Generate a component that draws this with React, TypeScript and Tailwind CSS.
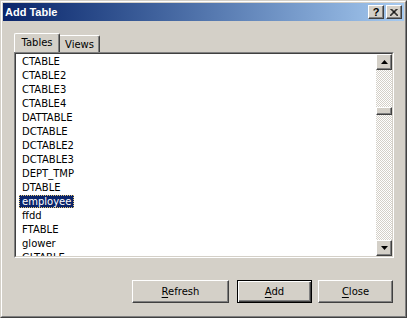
import React from 'react';

const tables = [
  'CTABLE',
  'CTABLE2',
  'CTABLE3',
  'CTABLE4',
  'DATTABLE',
  'DCTABLE',
  'DCTABLE2',
  'DCTABLE3',
  'DEPT_TMP',
  'DTABLE',
  'employee',
  'ffdd',
  'FTABLE',
  'glower',
  'GLTABLE',
];

const raised =
  'border border-t-white border-l-white border-r-[#404040] border-b-[#404040] shadow-[inset_-1px_-1px_#808080,inset_1px_1px_#d4d0c8] bg-[#d4d0c8]';

function Arrow({ up }: { up?: boolean }) {
  return (
    <svg width="7" height="4" viewBox="0 0 7 4" className="block">
      {up ? (
        <polygon points="3.5,0 7,4 0,4" fill="#000" />
      ) : (
        <polygon points="0,0 7,0 3.5,4" fill="#000" />
      )}
    </svg>
  );
}

function ScrollButton({ up }: { up?: boolean }) {
  return (
    <div className={`${raised} w-[16px] h-[16px] flex items-center justify-center`}>
      <Arrow up={up} />
    </div>
  );
}

function DialogButton({ label, width, isDefault }: { label: string; width: string; isDefault?: boolean }) {
  const cls = isDefault
    ? 'border border-black shadow-[inset_1px_1px_#ffffff,inset_-1px_-1px_#404040,inset_-2px_-2px_#808080] bg-[#d4d0c8]'
    : raised;
  return (
    <button className={`${cls} ${width} h-[23px] flex items-center justify-center text-[10px] text-black`}>
      <span>
        <u className="underline-offset-[2px]">{label[0]}</u>
        {label.slice(1)}
      </span>
    </button>
  );
}

export default function App() {
  return (
    <div className="w-[407px] h-[318px] bg-[#d4d0c8] border border-t-[#d4d0c8] border-l-[#d4d0c8] border-r-[#404040] border-b-[#404040] font-['DejaVu_Sans',sans-serif] select-none">
      <div className="h-full border border-t-white border-l-white border-r-[#808080] border-b-[#808080] p-px flex flex-col">
        {/* Caption */}
        <div className="h-[18px] flex items-center bg-gradient-to-r from-[#0a246a] to-[#a6caf0] pl-[2px] pr-[2px]">
          <span className="font-['Liberation_Sans',sans-serif] font-bold text-[11px] text-white leading-none">Add Table</span>
          <div className="ml-auto flex gap-[2px]">
            <div className={`${raised} w-[16px] h-[14px] flex items-center justify-center font-['Liberation_Sans',sans-serif] font-bold text-[11px] leading-none text-black`}>
              ?
            </div>
            <div className={`${raised} w-[16px] h-[14px] flex items-center justify-center`}>
              <svg width="8" height="7" viewBox="0 0 8 7" className="block">
                <path d="M0.5 0 L7.5 7 M1.5 0 L8.5 7 M7.5 0 L0.5 7 M6.5 0 L-0.5 7" stroke="#000" strokeWidth="1" />
              </svg>
            </div>
          </div>
        </div>

        {/* Body */}
        <div className="flex flex-col pl-[11px] pr-[10px]">
          {/* Tabs */}
          <div className="flex items-end h-[19px] mt-[12px] text-[10px] text-black">
            <div className="w-[46px] h-[19px] border-l border-t border-r border-l-white border-t-white border-r-[#404040] rounded-t-[2px] shadow-[inset_-1px_0_#808080] flex items-center justify-center pb-[1px]">
              Tables
            </div>
            <div className="w-[40px] h-[17px] border-t border-r border-t-white border-r-[#404040] rounded-tr-[2px] shadow-[inset_-1px_0_#808080] flex items-center justify-center">
              Views
            </div>
          </div>

          {/* List box */}
          <div className="h-[206px] border border-t-[#808080] border-l-[#808080] border-r-white border-b-white">
            <div className="h-full border border-t-[#404040] border-l-[#404040] border-r-[#d4d0c8] border-b-[#d4d0c8] bg-white flex">
              <div className="flex-1 overflow-hidden pt-[1px] pl-[3px]">
                {tables.map((t) => (
                  <div key={t} className="h-[14px] flex items-start text-[10px] leading-[13px] text-black">
                    {t === 'employee' ? (
                      <span className="h-[13px] px-[2px] bg-[#0a246a] text-white border border-dotted border-[#e8c872] leading-[11px]">
                        {t}
                      </span>
                    ) : (
                      <span className="px-[3px]">{t}</span>
                    )}
                  </div>
                ))}
              </div>
              {/* Scrollbar */}
              <div className="w-[16px] flex flex-col bg-[image:repeating-conic-gradient(#ffffff_0_25%,#d4d0c8_0_50%)] bg-[length:2px_2px]">
                <ScrollButton up />
                <div className="flex-1 pt-[37px]">
                  <div className={`${raised} h-[8px]`} />
                </div>
                <ScrollButton />
              </div>
            </div>
          </div>

          {/* Buttons */}
          <div className="flex justify-end mt-[22px] pr-[1px]">
            <DialogButton label="Refresh" width="w-[97px]" />
            <div className="w-[8px]" />
            <DialogButton label="Add" width="w-[75px]" isDefault />
            <div className="w-[6px]" />
            <DialogButton label="Close" width="w-[75px]" />
          </div>
        </div>
      </div>
    </div>
  );
}
